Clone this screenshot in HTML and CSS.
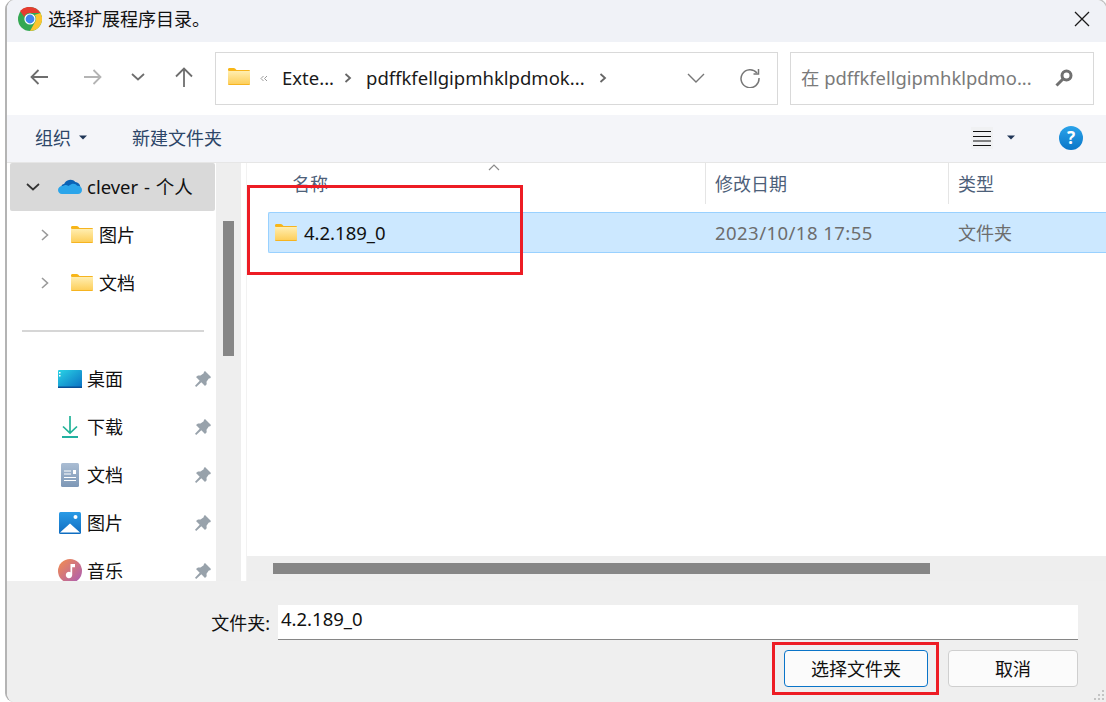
FILE: index.html
```html
<!DOCTYPE html>
<html lang="zh-CN">
<head>
<meta charset="utf-8">
<title>选择扩展程序目录。</title>
<link rel="stylesheet" href="styles.css">
</head>
<body>
<svg class="defs" width="0" height="0" aria-hidden="true">
  <defs>
    <linearGradient id="fg" x1="0" y1="0" x2="0" y2="1"><stop offset="0" stop-color="#ffeeb0"/><stop offset="1" stop-color="#fdcf5c"/></linearGradient>
    <linearGradient id="dg" x1="0" y1="0" x2="1" y2="1"><stop offset="0" stop-color="#2ad4e6"/><stop offset="1" stop-color="#0a6fc2"/></linearGradient>
    <linearGradient id="tg" x1="0" y1="0" x2="0" y2="1"><stop offset="0" stop-color="#aabdd3"/><stop offset="1" stop-color="#7d97b6"/></linearGradient>
    <linearGradient id="pg" x1="0" y1="0" x2="0" y2="1"><stop offset="0" stop-color="#2a9be6"/><stop offset="1" stop-color="#0f6cc0"/></linearGradient>
    <linearGradient id="mg" x1="0" y1="0" x2="1" y2="1"><stop offset="0" stop-color="#f58e4c"/><stop offset="1" stop-color="#a95bb8"/></linearGradient>
    <symbol id="folder" viewBox="0 0 22 17">
      <path d="M0 1.500C0 .7.6 0 1.400 0h4.400c.5 0 1 .2 1.300.6L8.500 2H0z" fill="#f8b616"/>
      <rect x="0" y="2" width="22" height="15" rx="1" fill="#f6b420"/>
      <rect x="0" y="3" width="22" height="13" fill="url(#fg)"/>
    </symbol>
    <symbol id="pin" viewBox="0 0 16 16">
      <path d="M10 0l6 6-.8 1.300-1.400.2-2.300 3.200.2 2.500L10 15 6.300 11.300 1.200 16 0 14.800l4.700-5.100L1 6l2-1.600 2.500.2 3.200-2.300.2-1.400z" fill="#98a2ab"/>
    </symbol>
    <symbol id="caret" viewBox="0 0 8 5"><path d="M0 .5h8L4 4.500z" fill="#1f3556"/></symbol>
    <symbol id="chev" viewBox="0 0 8 12"><path d="M1 1l5.500 5L1 11" fill="none" stroke="#9a9a9a" stroke-width="1.600"/></symbol>
    <symbol id="chev-dark" viewBox="0 0 8 12"><path d="M1.500 2l4.500 4-4.500 4" fill="none" stroke="#666" stroke-width="1.800"/></symbol>
  </defs>
</svg>

<div class="window">
  <header class="titlebar">
    <svg class="app-icon" viewBox="0 0 24 24">
      <circle cx="12" cy="12" r="12" fill="#34a853"/>
      <path d="M12 0a12 12 0 0 1 10.400 6H12a6 6 0 0 0-5.700 4.100L2 3.900A12 12 0 0 1 12 0z" fill="#e53c30"/>
      <path d="M22.400 6A12 12 0 0 1 12 24l4.900-8.800A6 6 0 0 0 16.600 8z" fill="#fbc52e"/>
      <circle cx="12" cy="12" r="5.600" fill="#fff"/>
      <circle cx="12" cy="12" r="4.400" fill="#3f85f0"/>
    </svg>
    <span class="title">选择扩展程序目录。</span>
    <svg class="close" viewBox="0 0 16 16"><path d="M1 1l14 14M15 1L1 15" stroke="#1a1a1a" stroke-width="1.300" fill="none"/></svg>
  </header>

  <nav class="navbar">
    <svg class="nav-icon" viewBox="0 0 18 16"><path d="M18 8H1.500M8.500 1L1.500 8l7 7" fill="none" stroke="#6e6e6e" stroke-width="1.800"/></svg>
    <svg class="nav-icon forward" viewBox="0 0 18 16"><path d="M0 8h16.500M9.500 1l7 7-7 7" fill="none" stroke="#b4b4b4" stroke-width="1.800"/></svg>
    <svg class="nav-icon down" viewBox="0 0 14 8"><path d="M1 1l6 5.500L13 1" fill="none" stroke="#6e6e6e" stroke-width="1.800"/></svg>
    <svg class="nav-icon up" viewBox="0 0 18 20"><path d="M9 20V2M1 9.500L9 1.500l8 8" fill="none" stroke="#6e6e6e" stroke-width="1.800"/></svg>

    <div class="address">
      <svg class="folder-addr"><use href="#folder"/></svg>
      <svg class="quote" viewBox="0 0 8 7"><path d="M3.500 1L1 3.500 3.500 6M7 1L4.500 3.500 7 6" fill="none" stroke="#9a9a9a"/></svg>
      <span class="crumb first">Exte...</span>
      <svg class="crumb-chev"><use href="#chev-dark"/></svg>
      <span class="crumb second">pdffkfellgipmhklpdmok...</span>
      <svg class="crumb-chev last"><use href="#chev-dark"/></svg>
      <svg class="addr-down" viewBox="0 0 18 10"><path d="M1 1l8 8 8-8" fill="none" stroke="#777" stroke-width="1.400"/></svg>
      <svg class="refresh" viewBox="0 0 20 20"><path d="M17 5A9 9 0 1 0 19 10" fill="none" stroke="#777" stroke-width="1.500"/><path d="M18.500 1v5h-5" fill="none" stroke="#777" stroke-width="1.500"/></svg>
    </div>

    <div class="search">
      <span class="search-text">在 pdffkfellgipmhklpdmo...</span>
      <svg class="search-icon" viewBox="0 0 18 18"><circle cx="11.500" cy="6.500" r="4.500" fill="none" stroke="#707070" stroke-width="3"/><path d="M8 10l-6.500 6.500" stroke="#707070" stroke-width="3"/></svg>
    </div>
  </nav>

  <div class="toolbar">
    <span class="tool">组织</span>
    <svg class="caret"><use href="#caret"/></svg>
    <span class="tool new-folder">新建文件夹</span>
    <span class="spacer"></span>
    <span class="view-btn"><svg class="list-icon" viewBox="0 0 18 16"><path d="M0 1.500h18M0 6.500h18M0 11h18M0 15.500h18" stroke="#111" stroke-width="1"/></svg></span>
    <svg class="caret view-caret"><use href="#caret"/></svg>
    <span class="help">?</span>
  </div>

  <main class="main">
    <aside class="sidebar">
      <div class="side-row active">
        <svg class="tw-open" viewBox="0 0 14 8"><path d="M1 1l6 5.500L13 1" fill="none" stroke="#333" stroke-width="1.700"/></svg>
        <svg class="side-icon" viewBox="0 0 24 16">
          <path d="M9.500 1.500C12 0 15.500.5 17.300 3c2.500.2 5 2 5 5l-12 4-7-4c0-1.800 1.300-3 3-3.300.5-1.400 2-2.700 3.200-3.200z" fill="#0a62b5"/>
          <path d="M6 6.500c1.500-.6 3-.5 4.300.4l3.400-1.900c2-.8 4.500-.2 5.500 1.800 2.600-.3 4.800 1.500 4.800 4.200 0 2.500-1.900 4-4 4H4c-2.500 0-4-1.800-4-4 0-2.400 2-4.200 4.500-4z" fill="#2ba5ea"/>
        </svg>
        <span class="side-label account">clever - 个人</span>
      </div>
      <div class="side-row sub">
        <svg class="tw"><use href="#chev"/></svg>
        <svg class="sub-folder"><use href="#folder"/></svg>
        <span class="sub-label">图片</span>
      </div>
      <div class="side-row sub">
        <svg class="tw"><use href="#chev"/></svg>
        <svg class="sub-folder"><use href="#folder"/></svg>
        <span class="sub-label">文档</span>
      </div>
      <div class="side-divider"></div>
      <div class="side-row pinned">
        <svg class="side-icon" viewBox="0 0 24 18"><rect width="24" height="18" rx="1" fill="url(#dg)"/><rect y="16.500" width="24" height="1.500" fill="#0a4f96"/><rect x="1" y="2" width="1.500" height="1.500" fill="#fff"/><rect x="1" y="5" width="1.500" height="1.500" fill="#fff"/></svg>
        <span class="side-label">桌面</span>
        <svg class="pin"><use href="#pin"/></svg>
      </div>
      <div class="side-row pinned">
        <svg class="side-icon" viewBox="0 0 24 22"><path d="M12 0v17M5 10.500l7 6.500 7-6.500" fill="none" stroke="#22b398" stroke-width="1.700"/><path d="M4 21h16" stroke="#22b0a0" stroke-width="2"/></svg>
        <span class="side-label">下载</span>
        <svg class="pin"><use href="#pin"/></svg>
      </div>
      <div class="side-row pinned">
        <svg class="side-icon" viewBox="0 0 24 24"><rect x="3" width="18" height="24" rx="1.500" fill="url(#tg)"/><path d="M6 8h7M6 11h7M6 14.500h12M6 17.500h12" stroke="#fff" stroke-width="1"/><rect x="15" y="7" width="3" height="4" fill="#fff"/></svg>
        <span class="side-label">文档</span>
        <svg class="pin"><use href="#pin"/></svg>
      </div>
      <div class="side-row pinned">
        <svg class="side-icon" viewBox="0 0 24 22"><rect x="1" width="22" height="22" rx="1.500" fill="url(#pg)"/><circle cx="17.500" cy="5" r="2" fill="#fff"/><path d="M2 20.500L12 11.500l10 9z" fill="#fff"/></svg>
        <span class="side-label">图片</span>
        <svg class="pin"><use href="#pin"/></svg>
      </div>
      <div class="side-row pinned">
        <svg class="side-icon" viewBox="0 0 24 24"><circle cx="12" cy="12" r="12" fill="url(#mg)"/><path d="M12.500 5h4.500v3.200h-2.800V16a3.200 3.200 0 1 1-1.700-2.800z" fill="#fff"/></svg>
        <span class="side-label">音乐</span>
        <svg class="pin"><use href="#pin"/></svg>
      </div>
    </aside>

    <div class="side-scroll"><div class="side-thumb"></div></div>
    <div class="pane-gap"></div>

    <section class="pane">
      <div class="col-head">
        <div class="col name-col">名称
          <svg class="sort" viewBox="0 0 12 7"><path d="M1 6l5-5 5 5" fill="none" stroke="#8a8a8a" stroke-width="1.200"/></svg>
        </div>
        <div class="col date-col">修改日期</div>
        <div class="col type-col">类型</div>
      </div>
      <div class="file-list">
        <div class="file-row">
          <div class="file-name"><svg class="file-folder"><use href="#folder"/></svg><span class="latin">4.2.189_0</span></div>
          <div class="file-meta date">2023/10/18 17:55</div>
          <div class="file-meta">文件夹</div>
        </div>
      </div>
      <div class="h-scroll"><div class="h-thumb"></div></div>
    </section>
  </main>

  <footer class="bottom">
    <div class="name-row">
      <label class="field-label">文件夹:</label>
      <div class="field latin">4.2.189_0</div>
    </div>
    <div class="btn-row">
      <button class="btn primary">选择文件夹</button>
      <button class="btn">取消</button>
    </div>
    <svg class="grip" viewBox="0 0 12 12"><path d="M9 1h2v2H9zM5 5h2v2H5zM9 5h2v2H9zM1 9h2v2H1zM5 9h2v2H5zM9 9h2v2H9z" fill="#c4c4c4"/></svg>
  </footer>
</div>

<div class="mark mark-file"></div>
<div class="mark mark-btn"></div>
</body>
</html>
```
FILE: styles.css
```css
* { box-sizing: border-box; }
html, body { margin: 0; height: 702px; overflow: hidden; background: #fff; }
body {
  position: relative;
  font-family: "Noto Sans", "Noto Sans CJK SC", sans-serif;
  font-size: 18px;
  line-height: 24px;
  color: #111;
}
.defs { position: absolute; }
svg { display: block; flex: none; }
.latin { font-size: 18.500px; }

.window {
  margin-left: 5px;
  height: 702px;
  display: flex;
  flex-direction: column;
  border-left: 2px solid #b4b4b4;
  border-radius: 9px 9px 0 9px;
  overflow: hidden;
  background: #fff;
  box-shadow: 1px -1px 0 0 #c4c4c4;
}

/* title bar */
.titlebar {
  flex: none;
  height: 42px;
  display: flex;
  align-items: center;
  padding: 0 16px 4px 11px;
  background: #f0f2f7;
}
.app-icon { width: 24px; height: 24px; }
.title { margin-left: 6px; font-size: 18px; }
.close { width: 16px; height: 16px; margin-left: auto; }

/* navigation bar */
.navbar {
  flex: none;
  height: 73px;
  display: flex;
  align-items: center;
  padding: 0 0 1px 23px;
  background: #fff;
}
.nav-icon { width: 18px; height: 16px; margin-bottom: 2px; }
.forward { margin-left: 36px; }
.down { width: 14px; height: 8px; margin-left: 29px; }
.up { height: 20px; margin-left: 30px; }

.address, .search {
  height: 53px;
  display: flex;
  align-items: center;
  border: 1px solid #d9d9d9;
  background: #fff;
}
.address { width: 563px; margin-left: 22px; padding-left: 12px; }
.folder-addr { width: 22px; height: 17px; margin-bottom: 4px; }
.quote { width: 8px; height: 7px; margin-left: 10px; }
.crumb { color: #1a1a1a; margin-bottom: 1px; font-size: 18.500px; }
.first { margin-left: 14px; width: 48px; white-space: nowrap; }
.crumb-chev { width: 8px; height: 12px; margin-left: 14px; }
.second { margin-left: 14px; width: 218px; white-space: nowrap; }
.last { margin-left: 15px; }
.addr-down { width: 18px; height: 10px; margin-left: 80px; }
.refresh { width: 20px; height: 20px; margin-left: 35px; }

.search { width: 304px; margin-left: 12px; padding-left: 10px; }
.search-text { color: #7a7a7a; width: 254px; white-space: nowrap; margin-bottom: 1px; font-size: 18.400px; }
.search-icon { width: 18px; height: 18px; }

/* toolbar */
.toolbar {
  flex: none;
  height: 48px;
  display: flex;
  align-items: center;
  padding: 0 23px 2px 28px;
  background: #f4f5f9;
  border-bottom: 1px solid #e6e6e6;
}
.tool { color: #2d4668; font-size: 18px; }
.caret { width: 8px; height: 5px; margin-left: 8px; }
.new-folder { margin-left: 45px; }
.spacer { flex: 1; }
.view-btn { width: 22px; height: 22px; display: flex; align-items: center; justify-content: center; background: #f0f1f3; }
.list-icon { width: 18px; height: 16px; }
.view-caret { margin-left: 14px; }
.help {
  width: 24px;
  height: 24px;
  margin-left: 44px;
  border-radius: 50%;
  background: linear-gradient(#2ba3ea, #0a76c8);
  color: #fff;
  font-size: 17px;
  font-weight: 700;
  line-height: 24px;
  text-align: center;
}

/* main area */
.main { flex: 1; min-height: 0; display: flex; background: #fff; }
.sidebar { flex: none; width: 209px; overflow: hidden; background: #fff; }
.side-row { height: 48px; display: flex; align-items: center; }
.active { margin-left: 3px; width: 205px; background: #d9d9d9; border-radius: 2px; padding-left: 16px; }
.tw-open { width: 14px; height: 8px; }
.active .side-icon { margin-left: 18px; }
.side-icon { width: 24px; height: 24px; }
.side-label { margin-left: 5px; white-space: nowrap; }
.account { font-size: 18.500px; word-spacing: 1px; }
.sub { padding-left: 34px; }
.tw { width: 8px; height: 12px; }
.sub-folder { width: 22px; height: 17px; margin-left: 22px; margin-bottom: 2px; }
.sub-label { margin-left: 6px; }
.side-divider { height: 48px; display: flex; align-items: center; }
.side-divider::before { content: ""; width: 182px; height: 2px; margin-left: 15px; background: #d6d6d6; }
.pinned { padding-left: 51px; }
.pin { width: 16px; height: 16px; margin-left: auto; margin-right: 5px; }

.side-scroll { flex: none; width: 25px; padding: 58px 7px 0; background: #eeeeee; }
.side-thumb { width: 11px; height: 135px; background: #868686; }
.pane-gap { flex: none; width: 6px; border-right: 1px solid #f2f2f2; }

.pane { flex: 1; min-width: 0; display: flex; flex-direction: column; }
.col-head { flex: none; height: 41px; display: grid; grid-template-columns: 459px 243px 1fr; }
.col { color: #4d6079; display: flex; align-items: center; border-right: 1px solid #e5e5e5; padding-left: 9px; }
.name-col { position: relative; padding-left: 45px; }
.type-col { border-right: 0; }
.sort { position: absolute; left: 241px; top: 1px; width: 12px; height: 7px; }

.file-list { flex: 1; min-height: 0; padding: 8px 0 0 21px; }
.file-row {
  height: 41px;
  display: grid;
  grid-template-columns: 437px 243px 1fr;
  align-items: center;
  background: #cce8ff;
  border: 1px solid #99d1ff;
  border-right: 0;
  border-radius: 2px 0 0 2px;
}
.file-name { display: flex; align-items: center; padding-left: 6px; }
.file-folder { width: 22px; height: 17px; margin-right: 7px; }
.file-meta { color: #6d6d6d; padding-left: 9px; }
.date { font-size: 18.500px; letter-spacing: .45px; }

.h-scroll { flex: none; height: 25px; padding: 7px 0 0 26px; background: #eeeeee; }
.h-thumb { width: 657px; height: 11px; background: #868686; }

/* bottom form */
.bottom {
  position: relative;
  flex: none;
  height: 121px;
  padding: 24px 28px 0 0;
  background: #efefef;
}
.name-row { display: flex; justify-content: flex-end; align-items: center; }
.field-label { margin-right: 8px; font-size: 18px; }
.field {
  width: 800px;
  height: 35px;
  padding: 2px 0 0 3px;
  background: #fff;
  border-bottom: 1px solid #868686;
}
.btn-row { display: flex; justify-content: flex-end; gap: 20px; margin-top: 10px; }
.btn {
  width: 130px;
  height: 37px;
  padding: 0;
  font: inherit;
  color: #111;
  background: #fbfbfb;
  border: 1px solid #cfcfcf;
  border-radius: 4px;
}
.primary { width: 144px; border-color: #0a74c8; }
.grip { position: absolute; right: 1px; bottom: 1px; width: 12px; height: 12px; }

/* red annotation boxes drawn over the dialog */
.mark { position: absolute; border: 3px solid #ed1c24; }
.mark-file { left: 247px; top: 185px; width: 276px; height: 90px; }
.mark-btn { left: 772px; top: 642px; width: 167px; height: 53px; }
```
